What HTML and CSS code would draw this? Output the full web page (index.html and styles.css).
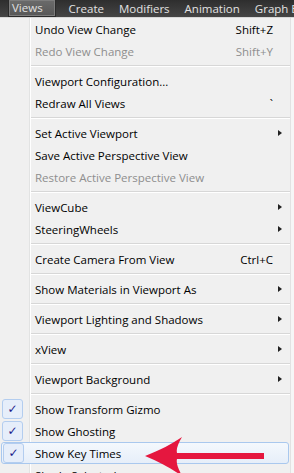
FILE: index.html
```html
<!DOCTYPE html>
<html lang="en">

<head>
    <meta charset="UTF-8" />
    <meta name="viewport" content="width=device-width, initial-scale=1.0" />
    <title>Views Menu</title>
    <link rel="stylesheet" href="styles.css">
</head>

<body>
    <div class="menubar">
        <span class="top active">Views</span>
        <span class="top">Create</span>
        <span class="top">Modifiers</span>
        <span class="top">Animation</span>
        <span class="top">Graph E</span>
    </div>

    <div class="menu">
        <div class="item"><span class="gutter"></span><span class="label">Undo View Change</span><span class="key">Shift+Z</span><span class="sub"></span></div>
        <div class="item disabled"><span class="gutter"></span><span class="label">Redo View Change</span><span class="key">Shift+Y</span><span class="sub"></span></div>
        <div class="sep"></div>
        <div class="item"><span class="gutter"></span><span class="label">Viewport Configuration...</span><span class="key"></span><span class="sub"></span></div>
        <div class="item"><span class="gutter"></span><span class="label">Redraw All Views</span><span class="key">`</span><span class="sub"></span></div>
        <div class="sep"></div>
        <div class="item"><span class="gutter"></span><span class="label">Set Active Viewport</span><span class="key"></span><span class="sub"><i class="tri"></i></span></div>
        <div class="item"><span class="gutter"></span><span class="label">Save Active Perspective View</span><span class="key"></span><span class="sub"></span></div>
        <div class="item disabled"><span class="gutter"></span><span class="label">Restore Active Perspective View</span><span class="key"></span><span class="sub"></span></div>
        <div class="sep"></div>
        <div class="item"><span class="gutter"></span><span class="label">ViewCube</span><span class="key"></span><span class="sub"><i class="tri"></i></span></div>
        <div class="item"><span class="gutter"></span><span class="label">SteeringWheels</span><span class="key"></span><span class="sub"><i class="tri"></i></span></div>
        <div class="sep"></div>
        <div class="item"><span class="gutter"></span><span class="label">Create Camera From View</span><span class="key">Ctrl+C</span><span class="sub"></span></div>
        <div class="sep"></div>
        <div class="item"><span class="gutter"></span><span class="label">Show Materials in Viewport As</span><span class="key"></span><span class="sub"><i class="tri"></i></span></div>
        <div class="sep"></div>
        <div class="item"><span class="gutter"></span><span class="label">Viewport Lighting and Shadows</span><span class="key"></span><span class="sub"><i class="tri"></i></span></div>
        <div class="sep"></div>
        <div class="item"><span class="gutter"></span><span class="label">xView</span><span class="key"></span><span class="sub"><i class="tri"></i></span></div>
        <div class="sep"></div>
        <div class="item"><span class="gutter"></span><span class="label">Viewport Background</span><span class="key"></span><span class="sub"><i class="tri"></i></span></div>
        <div class="sep"></div>
        <div class="item"><span class="gutter"><b class="check">&#10003;</b></span><span class="label">Show Transform Gizmo</span><span class="key"></span><span class="sub"></span></div>
        <div class="item"><span class="gutter"><b class="check">&#10003;</b></span><span class="label">Show Ghosting</span><span class="key"></span><span class="sub"></span></div>
        <div class="item hover"><span class="gutter"><b class="check">&#10003;</b></span><span class="label">Show Key Times</span><span class="key"></span><span class="sub"></span></div>
        <div class="item"><span class="gutter"></span><span class="label">Shade Selected</span><span class="key"></span><span class="sub"></span></div>

        <svg class="arrow" width="130" height="44" viewBox="140 432 130 44">
            <path d="M145,456 C160,450 172,444 182,437 C178,444 176,449 177,453 L264,453 L264,459 L177,459 C176,463 178,468 182,476 C172,469 160,462 145,456 Z" fill="#e5173f" />
        </svg>
    </div>
</body>

</html>
```

FILE: styles.css
```css
body {
    margin: 0;
    width: 294px;
    height: 473px;
    overflow: hidden;
    background: #f6f6f6;
    font-family: "Open Sans", "Noto Sans", sans-serif;
    font-size: 11.5px;
    color: #000;
}

.menubar {
    display: flex;
    height: 17px;
    align-items: stretch;
    gap: 11px;
    padding-left: 8px;
    background: linear-gradient(#2e2e2e, #454545);
    border-bottom: 1px solid #d8d8d8;
    white-space: nowrap;
    overflow: hidden;
}

.top {
    display: flex;
    align-items: center;
    padding: 0 2px 1px 2px;
    color: #e2e2e2;
    font-size: 11.5px;
}

.top.active {
    padding: 0 12px 1px 3px;
    background: linear-gradient(#6b6b6b, #575757);
    border: 1px solid #2a2a2a;
    border-top: none;
    box-shadow: inset 0 0 0 1px #7c7c7c;
}

.menu {
    position: relative;
    width: 290px;
    height: 456px;
    background: linear-gradient(to right, #f0f0f0 29px, #e2e3e3 29px, #e2e3e3 30px, #ffffff 30px, #ffffff 31px, #f0f0f0 31px);
    border-right: 1px solid #e2e2e2;
    overflow: hidden;
}

.item {
    display: grid;
    grid-template-columns: 31px 1fr auto 17px;
    align-items: center;
    height: 22px;
    white-space: nowrap;
}

.item.disabled {
    color: #8e8e8e;
}

.label {
    padding-left: 4px;
}

.key {
    text-align: right;
}

.gutter {
    display: flex;
    justify-content: center;
    align-items: center;
    height: 100%;
}

.check {
    display: flex;
    justify-content: center;
    align-items: center;
    width: 19px;
    height: 18px;
    margin-left: -6px;
    background: #e6eefa;
    border: 1px solid #b3cdef;
    border-radius: 3px;
    color: #1c1c8c;
    font-size: 12px;
    font-family: "DejaVu Sans", sans-serif;
}

.sub {
    display: flex;
    justify-content: center;
    align-items: center;
}

.tri {
    width: 0;
    height: 0;
    border-top: 3.5px solid transparent;
    border-bottom: 3.5px solid transparent;
    border-left: 4px solid #222;
    margin-left: -3px;
}

.item.hover {
    margin: 0 1px 1px 1px;
    height: 20px;
    border: 1px solid #a9c8ee;
    border-radius: 3px;
    background: linear-gradient(#f4f8fd, #e6eef9);
    grid-template-columns: 29px 1fr auto 16px;
}

.item.hover + .item {
    margin-top: -1px;
}

.sep {
    height: 8px;
    margin-left: 31px;
    background: linear-gradient(#f0f0f0 3px, #d7d7d7 3px, #d7d7d7 4px, #ffffff 4px, #ffffff 5px, #f0f0f0 5px);
}

.arrow {
    position: absolute;
    left: 140px;
    top: 414px;
}
```
